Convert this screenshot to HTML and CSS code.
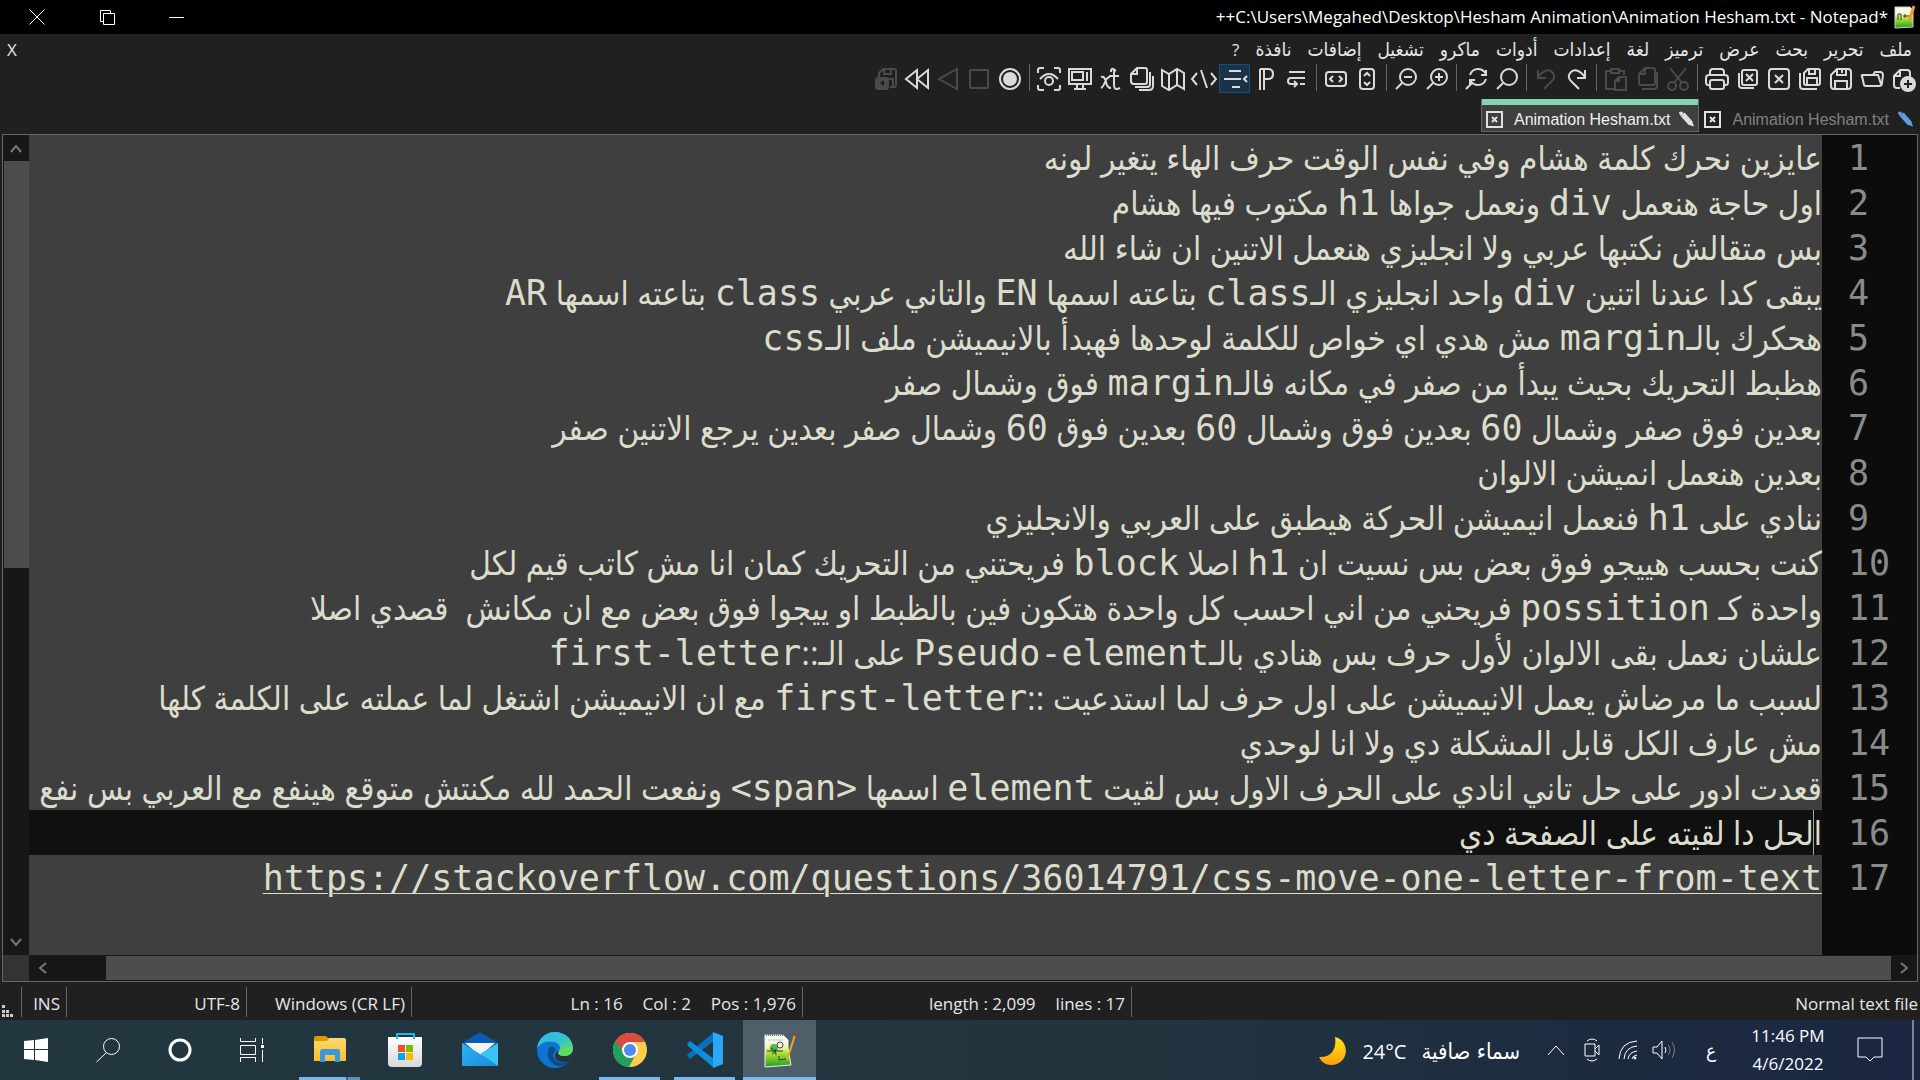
FILE: index.html
```html
<!DOCTYPE html>
<html lang="ar" dir="rtl">
<head>
<meta charset="utf-8">
<title>Animation Hesham.txt - Notepad++</title>
<link rel="stylesheet" href="styles.css">
</head>
<body>
<svg class="defs" aria-hidden="true">
  <defs>
    <linearGradient id="paper" x1="0" y1="0" x2="0" y2="1"><stop offset="0" stop-color="#fff"/><stop offset=".35" stop-color="#f2f7c8"/><stop offset=".6" stop-color="#a6dc2c"/><stop offset="1" stop-color="#19a024"/></linearGradient>
    <linearGradient id="folder" x1="0" y1="0" x2="0" y2="1"><stop offset="0" stop-color="#ffd96b"/><stop offset="1" stop-color="#f7bf2e"/></linearGradient>
    <linearGradient id="bag" x1="0" y1="0" x2="0" y2="1"><stop offset="0" stop-color="#fff"/><stop offset="1" stop-color="#d8d8d8"/></linearGradient>
    <linearGradient id="mail" x1="0" y1="0" x2="1" y2="1"><stop offset="0" stop-color="#2fb4ee"/><stop offset="1" stop-color="#1a8ade"/></linearGradient>
    <linearGradient id="edgetop" x1="0" y1="0" x2="1" y2="1"><stop offset="0" stop-color="#35b8f0"/><stop offset=".5" stop-color="#2fc5cf"/><stop offset="1" stop-color="#6be04f"/></linearGradient>
    <linearGradient id="moon" x1="0" y1="0" x2="0" y2="1"><stop offset="0" stop-color="#ffe81a"/><stop offset="1" stop-color="#ff9f0a"/></linearGradient>
    <g id="cross"><rect x="1" y="1" width="15" height="15" fill="none" stroke="#e0e0e0" stroke-width="2"/><path d="M6 6l5 5M11 6l-5 5" stroke="#e0e0e0" stroke-width="2"/></g>
    <g id="pencil"><path d="M1 3q0-2 3-2l2 2-3 3z"/><path d="M3 6l4-4 8 9 2 6-6-2z"/></g>
  </defs>
</svg>
<div class="desktop">
  <header class="titlebar">
    <svg class="app-icon" viewBox="0 0 21 24"><path d="M1 2h15l3 3v17l-18 1z" fill="url(#paper)" stroke="#ccc"/><path d="M4 15V9h3v6M9 11h4M11 9v4M13 11h4" stroke="#333" fill="none"/><path d="M20 1l-5 15" stroke="#f0a020" stroke-width="3"/></svg>
    <h1 class="title">*C:\Users\Megahed\Desktop\Hesham Animation\Animation Hesham.txt - Notepad++</h1>
    <div class="window-buttons">
      <button aria-label="تصغير"><svg viewBox="0 0 16 16"><path d="M0 8.500h15"/></svg></button>
      <button aria-label="استعادة"><svg viewBox="0 0 16 16"><path d="M4.500 4.500h11v11h-11zM4 12.500H1.500v-11h10V4"/></svg></button>
      <button aria-label="إغلاق"><svg viewBox="0 0 16 16"><path d="M.5 .5l15 15M15.500 .5l-15 15"/></svg></button>
    </div>
  </header>

  <nav class="menubar">
    <button>ملف</button><button>تحرير</button><button>بحث</button><button>عرض</button><button>ترميز</button><button>لغة</button><button>إعدادات</button><button>أدوات</button><button>ماكرو</button><button>تشغيل</button><button>إضافات</button><button>نافذة</button><button class="latin">?</button>
    <button class="latin doc-close">X</button>
  </nav>

  <div class="toolbar">
    <button aria-label="New"><svg viewBox="0 0 24 24"><path d="M9 21H6q-3 0-3-3V9l6-6h7q3 0 3 3v4M9 3v6H3"/><circle cx="17" cy="17" r="7" class="fill"/><path d="M17 13v8M13 17h8" stroke="#202020"/></svg></button>
    <button aria-label="Open"><svg viewBox="0 0 24 24"><path d="M2 9l2 9q1 1 2 1h13q3 0 3-3l1-8q0-2-2-3h-6l-2 3H3q-2 0-1 2zM2 8h16l3 9"/></svg></button>
    <button aria-label="Save"><svg viewBox="0 0 24 24"><path d="M8 2h11q3 0 3 3v14q0 3-3 3H5q-3 0-3-3V8zM8 2v6h9V2M13 3v3M6 22v-8h12v8"/></svg></button>
    <button aria-label="Save all"><svg viewBox="0 0 24 24"><path d="M10 2h10q2 0 2 2v12q0 2-2 2H8q-2 0-2-2V6zM11 2v5h6V2M9 18v-7h10v7M2 6v13q0 3 3 3h14"/></svg></button>
    <button aria-label="Close"><svg viewBox="0 0 24 24"><rect x="2" y="2" width="20" height="20" rx="3"/><path d="M8 8l8 8M16 8l-8 8"/></svg></button>
    <button aria-label="Close all"><svg viewBox="0 0 24 24"><rect x="6" y="3" width="15" height="15" rx="2"/><path d="M10 7l7 7M17 7l-7 7M3 6v12q0 3 3 3h12"/></svg></button>
    <button aria-label="Print"><svg viewBox="0 0 24 24"><path d="M5 8V5q0-3 3-3h8q3 0 3 3v3M5 18H3q-2 0-2-3v-4q0-3 3-3h16q3 0 3 3v4q0 3-2 3h-2"/><rect x="5" y="13" width="14" height="9" rx="2"/></svg></button>
    <span class="sep"></span>
    <button aria-label="Cut" disabled><svg viewBox="0 0 24 24"><circle cx="6" cy="19" r="4"/><circle cx="18" cy="19" r="4"/><path d="M4 1l12 15M20 1L8 16"/></svg></button>
    <button aria-label="Copy" disabled><svg viewBox="0 0 24 24"><path d="M10 1h8q2 0 2 2v13q0 2-2 2H6q-2 0-2-2V7zM10 1v6H4M22 5v14q0 3-3 3H7"/></svg></button>
    <button aria-label="Paste" disabled><svg viewBox="0 0 24 24"><path d="M6 4H2v18h8M16 4h4v4M7 2h8v4H7z"/><path d="M15 10h7v13H11v-9zM15 10v4h-4"/></svg></button>
    <span class="sep"></span>
    <button aria-label="Redo"><svg viewBox="0 0 24 24"><path d="M20 3v8h-8M20 10Q12 0 6 5q-5 5 1 10l7 7"/></svg></button>
    <button aria-label="Undo" disabled><svg viewBox="0 0 24 24"><path d="M4 3v8h8M4 10Q12 0 18 5q5 5-1 10l-7 7"/></svg></button>
    <span class="sep"></span>
    <button aria-label="Find"><svg viewBox="0 0 24 24"><circle cx="14" cy="10" r="8"/><path d="M8 16l-6 6"/></svg></button>
    <button aria-label="Replace"><svg viewBox="0 0 24 24"><path d="M6 8q2-6 8-6 5 0 8 5M22 3v5h-5M22 12q-2 6-8 6-5 0-8-5M6 18v-5h5M8 16l-6 6"/></svg></button>
    <span class="sep"></span>
    <button aria-label="Zoom in"><svg viewBox="0 0 24 24"><circle cx="14" cy="10" r="8"/><path d="M8 16l-6 6M10 10h8M14 6v8"/></svg></button>
    <button aria-label="Zoom out"><svg viewBox="0 0 24 24"><circle cx="14" cy="10" r="8"/><path d="M8 16l-6 6M10 10h8"/></svg></button>
    <span class="sep"></span>
    <button aria-label="Sync vertical"><svg viewBox="0 0 24 24"><rect x="5" y="2" width="14" height="20" rx="3"/><path d="M9 9l3-3 3 3M9 15l3 3 3-3"/></svg></button>
    <button aria-label="Sync horizontal"><svg viewBox="0 0 24 24"><rect x="2" y="5" width="20" height="14" rx="3"/><path d="M9 9l-3 3 3 3M15 9l3 3-3 3"/></svg></button>
    <span class="sep"></span>
    <button aria-label="Word wrap"><svg viewBox="0 0 24 24"><path d="M4 5h16M20 11H6q-3 0-3 3t3 3h5M9 14l3 3-3 3M15 17h5"/></svg></button>
    <button aria-label="All characters"><svg viewBox="0 0 24 24"><path d="M6 2h8q5 0 5 5t-5 5h-3M6 2v21M10 2v21"/></svg></button>
    <button aria-label="Indent guide" class="active"><svg viewBox="0 0 24 24"><path d="M6 4h12M1 12h17M9 20h8M24 9l-3 3 3 3"/></svg></button>
    <button aria-label="Function list"><svg viewBox="0 0 24 24"><path d="M5 6l-5 6 5 6M19 6l5 6-5 6M9 3l6 18"/></svg></button>
    <button aria-label="Map"><svg viewBox="0 0 24 24"><path d="M1 3l7 4 8-5 7 4v16l-7-4-8 5-7-4zM8 7v15M16 2v16"/></svg></button>
    <button aria-label="Document list"><svg viewBox="0 0 24 24"><path d="M7 1h8q2 0 2 2v12q0 2-2 2H4q-3 0-3-3V7zM7 1v6H1M20 5v12q0 3-3 3H5M23 9v10q0 4-4 4H9"/></svg></button>
    <button aria-label="Language"><svg viewBox="0 0 24 24"><path d="M2 10q4-1 5 5t5 6M11 10q-3 0-5 5t-4 6M17 4q-5-5-5 1M15 3v15q0 6 6 3M10 9h10"/></svg></button>
    <button aria-label="Document view"><svg viewBox="0 0 24 24"><path d="M1 2h22v15H1zM4 5h11v8H4zM19 5v9M9 17v5M15 17v5M6 22h12"/></svg></button>
    <button aria-label="Monitoring"><svg viewBox="0 0 24 24"><path d="M1 6V3q0-2 2-2h4M17 1h4q2 0 2 2v3M23 18v3q0 2-2 2h-4M7 23H3q-2 0-2-2v-3M3 12Q12 2 21 12"/><circle cx="12" cy="14" r="4"/></svg></button>
    <span class="sep"></span>
    <button aria-label="Record"><svg viewBox="0 0 24 24"><circle cx="12" cy="12" r="10"/><circle cx="12" cy="12" r="6" class="fill"/></svg></button>
    <button aria-label="Stop" disabled><svg viewBox="0 0 24 24"><rect x="3" y="3" width="18" height="18" rx="1"/></svg></button>
    <button aria-label="Play" disabled><svg viewBox="0 0 24 24"><path d="M21 2v20L3 12z"/></svg></button>
    <button aria-label="Play multiple"><svg viewBox="0 0 24 24"><path d="M12 3v18L1 12zM23 3v18l-11-9z"/></svg></button>
    <button aria-label="Save macro" disabled><svg viewBox="0 0 24 24"><path d="M5 10V6l4-4h11q2 0 2 2v14q0 2-2 2h-4M10 2v5h7V2M13 12h6v8"/><rect x="2" y="11" width="12" height="11" rx="2" class="fill"/><path d="M10 13l-4 3 4 3z" fill="#202020" stroke="none"/></svg></button>
  </div>

  <div class="tabs">
    <button class="tab"><svg class="pen blue" viewBox="0 0 18 18"><use href="#pencil"/></svg><span>Animation Hesham.txt</span><svg class="close" viewBox="0 0 17 17"><use href="#cross"/></svg></button>
    <button class="tab current"><svg class="pen" viewBox="0 0 18 18"><use href="#pencil"/></svg><span>Animation Hesham.txt</span><svg class="close" viewBox="0 0 17 17"><use href="#cross"/></svg></button>
  </div>

  <main class="editor">
    <ol class="code">
      <li><span class="num">1</span><p>عايزين نحرك كلمة هشام وفي نفس الوقت حرف الهاء يتغير لونه</p></li>
      <li><span class="num">2</span><p>اول حاجة هنعمل <code>div</code> ونعمل جواها <code>h1</code> مكتوب فيها هشام</p></li>
      <li><span class="num">3</span><p>بس متقالش نكتبها عربي ولا انجليزي هنعمل الاتنين ان شاء الله</p></li>
      <li><span class="num">4</span><p>يبقى كدا عندنا اتنين <code>div</code> واحد انجليزي الـ<code>class</code> بتاعته اسمها <code>EN</code> والتاني عربي <code>class</code> بتاعته اسمها <code>AR</code></p></li>
      <li><span class="num">5</span><p>هحكرك بالـ<code>margin</code> مش هدي اي خواص للكلمة لوحدها فهبدأ بالانيميشن ملف الـ<code>css</code></p></li>
      <li><span class="num">6</span><p>هظبط التحريك بحيث يبدأ من صفر في مكانه فالـ<code>margin</code> فوق وشمال صفر</p></li>
      <li><span class="num">7</span><p>بعدين فوق صفر وشمال <code>60</code> بعدين فوق وشمال <code>60</code> بعدين فوق <code>60</code> وشمال صفر بعدين يرجع الاتنين صفر</p></li>
      <li><span class="num">8</span><p>بعدين هنعمل انميشن الالوان</p></li>
      <li><span class="num">9</span><p>ننادي على <code>h1</code> فنعمل انيميشن الحركة هيطبق على العربي والانجليزي</p></li>
      <li><span class="num">10</span><p>كنت بحسب هييجو فوق بعض بس نسيت ان <code>h1</code> اصلا <code>block</code> فريحتني من التحريك كمان انا مش كاتب قيم لكل</p></li>
      <li><span class="num">11</span><p>واحدة كـ <code>possition</code> فريحني من اني احسب كل واحدة هتكون فين بالظبط او ييجوا فوق بعض مع ان مكانش  قصدي اصلا</p></li>
      <li><span class="num">12</span><p>علشان نعمل بقى الالوان لأول حرف بس هنادي بالـ<code>Pseudo-element</code> على الـ::<code>first-letter</code></p></li>
      <li><span class="num">13</span><p>لسبب ما مرضاش يعمل الانيميشن على اول حرف لما استدعيت ::<code>first-letter</code> مع ان الانيميشن اشتغل لما عملته على الكلمة كلها</p></li>
      <li><span class="num">14</span><p>مش عارف الكل قابل المشكلة دي ولا انا لوحدي</p></li>
      <li><span class="num">15</span><p>قعدت ادور على حل تاني انادي على الحرف الاول بس لقيت <code>element</code> اسمها <code>&lt;span&gt;</code> ونفعت الحمد لله مكنتش متوقع هينفع مع العربي بس نفع</p></li>
      <li class="selected"><span class="num">16</span><p>الحل دا لقيته على الصفحة دي<i class="caret"></i></p></li>
      <li><span class="num">17</span><p><a href="https://stackoverflow.com/questions/36014791/css-move-one-letter-from-text"><code>https://stackoverflow.com/questions/36014791/css-move-one-letter-from-text</code></a></p></li>
    </ol>
    <div class="vscroll">
      <button aria-label="أعلى"><svg viewBox="0 0 12 9"><path d="M1 8l5-6 5 6"/></svg></button>
      <div class="track"><div class="thumb"></div></div>
      <button aria-label="أسفل"><svg viewBox="0 0 12 9"><path d="M1 1l5 6 5-6"/></svg></button>
    </div>
    <div class="hscroll">
      <button aria-label="يمين"><svg viewBox="0 0 9 12"><path d="M1 1l6 5-6 5"/></svg></button>
      <div class="track"><div class="thumb"></div></div>
      <button aria-label="يسار"><svg viewBox="0 0 9 12"><path d="M8 1L2 6l6 5"/></svg></button>
    </div>
    <div class="corner"></div>
  </main>

  <footer class="status" dir="ltr">
    <span class="grip"><svg viewBox="0 0 11 12"><path d="M0 0h3v3H0zM0 5h3v3H0zM4 5h3v3H4zM0 9h3v3H0zM4 9h3v3H4zM8 9h3v3H8z"/></svg></span>
    <span class="ins">INS</span><span class="enc">UTF-8</span><span class="eol">Windows (CR LF)</span>
    <span class="pos"><b>Ln : 16</b><b>Col : 2</b><b>Pos : 1,976</b></span>
    <span class="len"><b>length : 2,099</b><b>lines : 17</b></span>
    <span class="type">Normal text file</span>
  </footer>

  <footer class="taskbar" dir="ltr">
    <div class="system">
      <button aria-label="ابدأ"><svg viewBox="0 0 24 24" width="24"><path fill="#fff" d="M0 3l10-1v9H0zM11 2l13-2v11H11zM0 12h10v10L0 21zM11 12h13v12l-13-2z"/></svg></button>
      <button aria-label="بحث"><svg viewBox="0 0 24 24" width="24" class="line"><circle cx="15.500" cy="8.500" r="8"/><path d="M10 15L.5 24"/></svg></button>
      <button aria-label="Cortana"><svg viewBox="0 0 24 24" width="24"><circle cx="12" cy="12" r="10" fill="none" stroke="#fff" stroke-width="3"/></svg></button>
      <button aria-label="عرض المهام"><svg viewBox="0 0 24 24" width="24" class="line"><path d="M.5 0v3.500h15V0M.5 7.500h15v9H.5zM.5 24v-4.500h15V24M22.500 0v6M22.500 12v12"/><path d="M21 7h3v3h-3z" fill="#fff" stroke="none"/></svg></button>
    </div>
    <div class="apps">
      <button aria-label="File Explorer" class="open multi"><svg viewBox="0 0 36 36" width="36"><path d="M2 6q0-2 2-2h10l3 3-1 3H2z" fill="#e09a00"/><path d="M2 9h13l2-3h15q2 0 2 2v21H2z" fill="url(#folder)"/><path d="M8 30V20q0-3 3-3h14q3 0 3 3v10h-5v-7H13v7z" fill="#3a96dd"/></svg></button>
      <button aria-label="Microsoft Store"><svg viewBox="0 0 36 36" width="36"><path d="M1 5h34v26q0 4-4 4H5q-4 0-4-4z" fill="url(#bag)"/><path d="M10 7V2h17v5" fill="none" stroke="#27b4f2" stroke-width="2"/><path d="M11 13h7v7h-7z" fill="#f25022"/><path d="M19 13h7v7h-7z" fill="#7fba00"/><path d="M11 21h7v7h-7z" fill="#00a4ef"/><path d="M19 21h7v7h-7z" fill="#ffb900"/></svg></button>
      <button aria-label="Mail"><svg viewBox="0 0 36 36" width="36"><path d="M0 11L18 0l18 11v3H0z" fill="#0a5cb0"/><path d="M3 11h30L18 24z" fill="#f4f4f6"/><path d="M0 11l18 11L36 34H0z" fill="url(#mail)"/><path d="M36 11L18 22l18 12z" fill="#35c5f5"/></svg></button>
      <button aria-label="Edge"><svg viewBox="0 0 36 36" width="36"><circle cx="18" cy="18" r="18" fill="#0b76d0"/><path d="M0 17C1 6 9 0 18 0c11 0 18 8 18 16 0 6-4 8-8 8-6 0-8-3-6-5 2-3 1-8-5-9-8-2-15 2-17 7z" fill="url(#edgetop)"/><path d="M13 15c-5 6-2 16 7 19 6 1 11-2 13-5-6 3-14 2-16-3-2-4 0-6 2-8-1-2-3-4-6-3z" fill="#114a8b"/><path d="M22 19c-2 3 0 5 6 5 4 0 6-2 8-5v10h-3c-8 3-15 0-15-5 0-3 2-5 4-5z" fill="#22363f"/><path d="M22 19c-2 3 0 5 6 5 4 0 8-3 8-8l-8-2z" fill="#5fdb62"/></svg></button>
      <button aria-label="Chrome" class="open"><svg viewBox="0 0 36 36" width="36"><circle cx="18" cy="18" r="17" fill="#ffcd46"/><path d="M18 18h-7L3 10A17 17 0 0 1 33 10H18z" fill="#dd4b3e"/><path d="M3.500 9A17 17 0 0 0 17 35l7-13-6-4-6 2z" fill="#1fa05f"/><circle cx="18" cy="18" r="8" fill="#fff"/><circle cx="18" cy="18" r="6" fill="#4c8bf5"/></svg></button>
      <button aria-label="Visual Studio Code" class="open"><svg viewBox="0 0 36 36" width="36"><path d="M0 24l3 3 24-18V0L1 22z" fill="#0870b8"/><path d="M0 12l3-3 24 18v9L1 14z" fill="#0f8cdb"/><path d="M26 0l10 4v28l-10 4z" fill="#2aa8f5"/></svg></button>
      <button aria-label="Notepad++" class="open current"><svg viewBox="0 0 36 36" width="36"><path d="M3 3h18l5 5v8l3 17-26 2z" fill="url(#paper)" stroke="#eee"/><path d="M4 3h17" stroke="#777" stroke-width="2" stroke-dasharray="1 1"/><path d="M6 8h15" stroke="#b5cbd8"/><circle cx="12" cy="16" r="4" fill="#55b848"/><circle cx="18" cy="13" r="3" fill="#eee" stroke="#444"/><path d="M5 19h16M9 16q5 2 5 7M10 22q4-1 4-5M17 24v4l7-1" stroke="#26452a" fill="none"/><path d="M33 3L25 28" stroke="#f2a71b" stroke-width="2"/><path d="M34 1l-1 3" stroke="#b33" stroke-width="3"/></svg></button>
    </div>
    <div class="tray">
      <button class="weather"><svg viewBox="0 0 28 30" width="28"><path d="M16 1c16 4 14 28-4 28q-8 0-12-8c12 1 18-8 16-20z" fill="url(#moon)"/></svg><span>24°C</span><span class="ar">سماء صافية</span></button>
      <button class="t36" aria-label="المزيد"><svg viewBox="0 0 18 12" width="18" class="line"><path d="M1 11l8-9 8 9"/></svg></button>
      <button class="t36" aria-label="الكاميرا"><svg viewBox="0 0 16 24" width="16" class="line"><path d="M1 6h10v12H1zM11 11l4-4v10l-4-4M3 3q5-4 10 0M3 21q5 4 10 0"/></svg></button>
      <button class="t36" aria-label="الشبكة"><svg viewBox="0 0 20 20" width="20" class="line"><path d="M1 19Q2 2 19 1M6 19Q7 7 19 6M10 19q1-7 9-8M14 19q0-3 5-4"/><circle cx="17" cy="18" r="1" fill="#fff"/></svg></button>
      <button class="t36" aria-label="الصوت"><svg viewBox="0 0 24 20" width="24" class="line"><path d="M1 7h4l5-6v18l-5-6H1zM13 7q2 3 0 6"/><path d="M16 5q4 5 0 10M20 2q5 8 0 16" opacity=".4"/></svg></button>
      <button class="lang ar">ع</button>
      <button class="clock"><time>11:46 PM</time><time>4/6/2022</time></button>
      <button class="bell" aria-label="الإشعارات"><svg viewBox="0 0 26 26" width="26" class="line"><path d="M1 1h24v19h-8l-4 4-4-4H1z"/></svg></button>
      <span class="peek"></span>
    </div>
  </footer>
</div>
</body>
</html>
```
FILE: styles.css
```css
* { box-sizing: border-box; }
body { margin: 0; background: #202020; color: #e6e6e6; font-family: "Open Sans", "DejaVu Sans Condensed", sans-serif; }
button { margin: 0; padding: 0; border: 0; background: none; color: inherit; font: inherit; display: flex; align-items: center; justify-content: center; }
svg { display: block; }
.defs { position: absolute; width: 0; height: 0; }
.desktop { display: flex; flex-direction: column; min-height: 100vh; overflow: hidden; }

.titlebar { display: flex; align-items: center; height: 34px; background: #000; padding: 0 5px 0 2px; }
.app-icon { width: 21px; height: 24px; }
.title { margin: 0; padding-right: 6px; font-size: 17px; font-weight: 400; line-height: 34px; color: #fff; white-space: nowrap; }
.window-buttons { display: flex; margin-right: auto; }
.window-buttons button { width: 70px; height: 34px; }
.window-buttons svg { width: 16px; height: 16px; fill: none; stroke: #fff; }

.menubar { display: flex; gap: 16px; height: 30px; padding: 0 8px 0 7px; font: 19px "DejaVu Sans Condensed", sans-serif; }
.menubar button { white-space: nowrap; }
.menubar .latin { font: 17px "Open Sans", sans-serif; }
.menubar .doc-close { margin-right: auto; }

.toolbar { display: flex; height: 35px; align-items: flex-start; padding-right: 2px; }
.toolbar button { width: 31px; height: 29px; border: 1px solid transparent; }
.toolbar svg { width: 24px; height: 24px; fill: none; stroke: #dadada; stroke-width: 2; overflow: visible; }
.toolbar .fill { fill: #dadada; }
.toolbar button:disabled svg { stroke: #4a4a4a; }
.toolbar button:disabled .fill { fill: #4a4a4a; }
.toolbar .active { background: #1b3348; border-color: #14507f; }
.sep { width: 8px; height: 27px; background: linear-gradient(#666, #666) center / 1px 100% no-repeat; }

.tabs { display: flex; height: 35px; padding-right: 2px; font-family: "Liberation Sans", sans-serif; font-size: 16px; align-items: flex-start; }
.tab { height: 33px; gap: 8px; padding: 8px 3px 0 4px; color: #808080; border: 1px solid transparent; border-top: 0; }
.tab span { padding: 2px 0 0 3px; white-space: nowrap; }
.tab.current { background: #3f3f3f; color: #f0f0f0; border-color: #666; box-shadow: inset 0 6px #84d3b3; }
.pen { width: 17px; height: 18px; fill: #e0e0e0; }
.pen.blue { fill: #5aa0dc; }
.close { width: 17px; height: 17px; }

.editor { flex: 1; margin: 0 2px; border: 1px solid #666; display: grid; grid-template: 1fr 26px / 1fr 26px; background: #3f3f3f; }
.code { margin: 0; padding: 0; list-style: none; min-width: 0; background: linear-gradient(to left, #0c0c0c 95px, #3f3f3f 95px); color: #dcdccc; }
.code li { display: flex; height: 45px; }
.code p { flex: 1; min-width: 0; margin: 0; font: 33px/45px "Open Sans", "DejaVu Sans Condensed", "DejaVu Sans", sans-serif; white-space: pre; position: relative; }
.code code, .num { font-family: "DejaVu Sans Mono", monospace; font-size: 35px; line-height: 1; }
.code .num { flex: none; width: 95px; padding-left: 26px; direction: ltr; line-height: 47px; color: #8a8a8a; }
.code a { color: inherit; text-underline-offset: 3px; text-decoration-thickness: 1px; }
.selected p { background: #101010; }
.caret { position: absolute; right: 8px; top: 0; width: 1px; height: 45px; background: #8faf9f; }

.vscroll { display: flex; flex-direction: column; background: #171717; border-left: 1px solid #171717; }
.vscroll button, .hscroll button { width: 26px; height: 26px; flex: none; }
.vscroll svg { width: 12px; height: 9px; }
.hscroll svg { width: 9px; height: 12px; }
.vscroll path, .hscroll path { fill: none; stroke: #777; stroke-width: 2; }
.track { flex: 1; }
.vscroll .thumb { height: 53%; background: #4d4d4d; }
.hscroll { display: flex; background: #171717; padding: 1px 0; align-items: center; }
.hscroll .track { align-self: stretch; }
.hscroll .thumb { height: 100%; margin-left: 51px; background: #4d4d4d; }
.corner { background: #333; }

.status { display: flex; height: 38px; padding: 5px 2px 3px 0; font-size: 17px; line-height: 33px; white-space: nowrap; }
.status > span { display: flex; justify-content: flex-end; gap: 20px; padding-right: 6px; border-right: 1px solid #666; }
.status b { font-weight: 400; }
.status .grip { width: 22px; align-items: flex-end; justify-content: flex-start; padding-left: 2px; }
.grip svg { width: 11px; height: 12px; fill: #ccc; }
.status .ins { width: 45px; }
.status .enc { width: 180px; }
.status .eol { width: 165px; }
.status .pos { width: 391px; }
.status .len { width: 329px; }
.status .type { flex: 1; border: 0; padding: 0; }

.taskbar { display: flex; height: 60px; background: linear-gradient(90deg, #22363f 0, #22353f 60%, #1c2a40 85%, #1b2742 100%); color: #fff; }
.taskbar button { height: 60px; }
.system { display: flex; margin-right: 4px; }
.system button { width: 72px; }
.line { fill: none; stroke: #fff; stroke-width: 1; overflow: visible; }
.apps { display: flex; }
.apps button { width: 75px; }
.apps .open { background: linear-gradient(#76b9ed, #76b9ed) center bottom / 61px 3px no-repeat; }
.apps .multi { background: linear-gradient(90deg, #76b9ed 47px, #3f6680 47px, #3f6680 49px, #5b93ba 49px) center bottom / 61px 3px no-repeat; }
.apps .current { background: linear-gradient(#76b9ed, #76b9ed) center bottom / 73px 3px no-repeat, linear-gradient(#4e5f69, #4e5f69) center / 73px 100% no-repeat; }
.tray { display: flex; margin-left: auto; }
.weather { gap: 15px; margin-right: 18px; font-size: 20px; padding-top: 2px; }
.ar { font-family: "DejaVu Sans Condensed", sans-serif; font-size: 22px; }
.t36 { width: 36px; }
.tray .lang { width: 58px; font: 19px "DejaVu Sans Condensed", sans-serif; }
.clock { width: 96px; flex-direction: column; font-size: 17px; line-height: 28px; }
.bell { width: 68px; }
.peek { width: 8px; margin-left: 8px; border-left: 2px solid #7c8494; }
```
